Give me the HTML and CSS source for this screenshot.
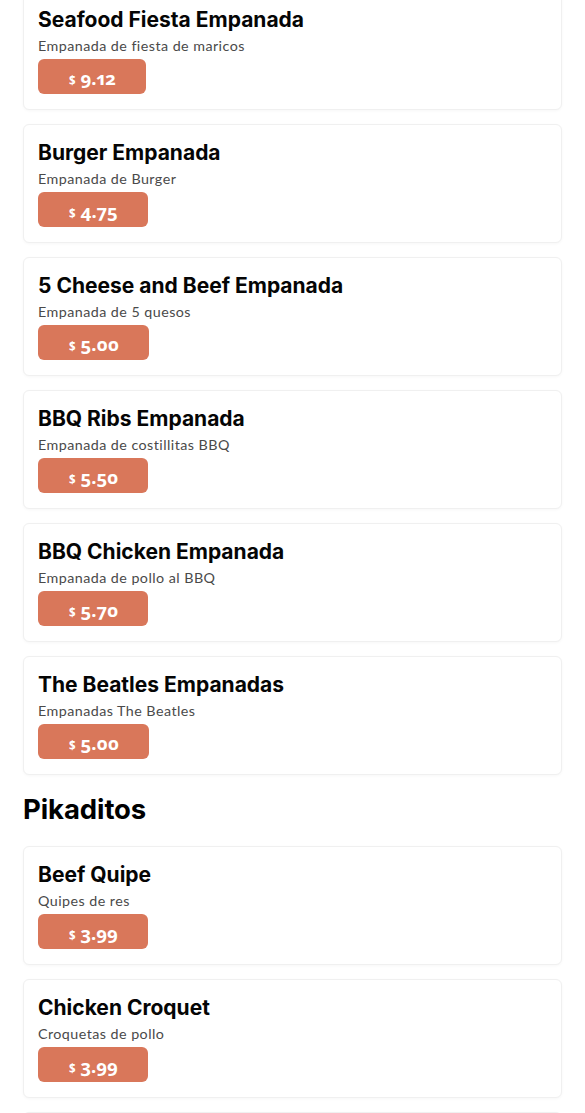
FILE: index.html
```html
<!DOCTYPE html>
<html>
<head>
<meta charset="utf-8">
<link rel="stylesheet" href="styles.css">
</head>
<body>
<main class="menu">
  <section class="group">
    <div class="card"><h3 class="title">Seafood Fiesta Empanada</h3><p class="desc">Empanada de fiesta de maricos</p><button class="price"><span class="cur">$</span><span class="amt">9.12</span></button></div>
    <div class="card"><h3 class="title">Burger Empanada</h3><p class="desc">Empanada de Burger</p><button class="price"><span class="cur">$</span><span class="amt">4.75</span></button></div>
    <div class="card"><h3 class="title">5 Cheese and Beef Empanada</h3><p class="desc">Empanada de 5 quesos</p><button class="price"><span class="cur">$</span><span class="amt">5.00</span></button></div>
    <div class="card"><h3 class="title">BBQ Ribs Empanada</h3><p class="desc">Empanada de costillitas BBQ</p><button class="price"><span class="cur">$</span><span class="amt">5.50</span></button></div>
    <div class="card"><h3 class="title">BBQ Chicken Empanada</h3><p class="desc">Empanada de pollo al BBQ</p><button class="price"><span class="cur">$</span><span class="amt">5.70</span></button></div>
    <div class="card"><h3 class="title">The Beatles Empanadas</h3><p class="desc">Empanadas The Beatles</p><button class="price"><span class="cur">$</span><span class="amt">5.00</span></button></div>
  </section>
  <h2 class="section-title">Pikaditos</h2>
  <section class="group">
    <div class="card"><h3 class="title">Beef Quipe</h3><p class="desc">Quipes de res</p><button class="price"><span class="cur">$</span><span class="amt">3.99</span></button></div>
    <div class="card"><h3 class="title">Chicken Croquet</h3><p class="desc">Croquetas de pollo</p><button class="price"><span class="cur">$</span><span class="amt">3.99</span></button></div>
    <div class="card card-next"></div>
  </section>
</main>
</body>
</html>
```
FILE: styles.css
```css
html, body {
  margin: 0;
  padding: 0;
  background: #ffffff;
}
.menu {
  padding: 0 23px;
  margin-top: -9px;
  font-family: "Inter", sans-serif;
  color: #000;
}
.group {
  display: flex;
  flex-direction: column;
  gap: 14px;
}
.card {
  display: flex;
  flex-direction: column;
  align-items: flex-start;
  padding: 15px 14px;
  border: 1px solid #f0f0f0;
  border-radius: 6px;
  box-shadow: 0 1px 3px rgba(0,0,0,0.035);
  background: #fff;
  box-sizing: border-box;
  height: 119px;
}
.title {
  margin: 0;
  font-family: "Inter", sans-serif;
  font-size: 21px;
  line-height: 25px;
  font-weight: 700;
  letter-spacing: 0;
  color: #050505;
}
.desc {
  margin: 4px 0 0;
  font-family: "Lato", sans-serif;
  font-size: 14.3px;
  line-height: 20px;
  color: #4a4a4a;
  letter-spacing: 0.45px;
}
.price {
  margin-top: 3px;
  height: 37px;
  padding: 9px 30px 0 31px;
  border: none;
  border-radius: 6px;
  background: #d9775a;
  color: #fff;
  display: flex;
  align-items: baseline;
  justify-content: center;
  gap: 5px;
  box-sizing: border-box;
  font-family: "Noto Sans", sans-serif;
}
.cur {
  font-size: 11.5px;
  font-weight: 700;
}
.amt {
  font-size: 18.5px;
  font-weight: 700;
  font-variant-numeric: oldstyle-nums proportional-nums;
  line-height: 20px;
}
.section-title {
  margin: 0;
  padding: 20px 0 22px;
  font-family: "Inter", sans-serif;
  font-size: 27.5px;
  line-height: 29px;
  font-weight: 700;
  letter-spacing: -0.1px;
}
```
